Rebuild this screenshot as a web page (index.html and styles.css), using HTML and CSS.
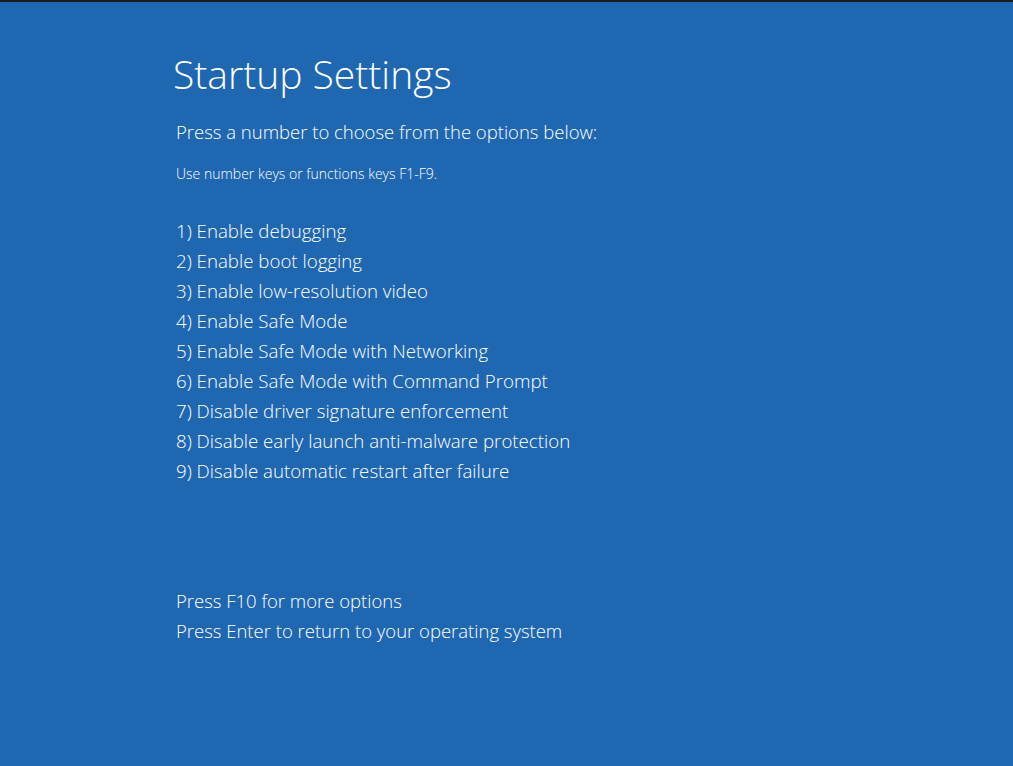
FILE: index.html
```html
<!DOCTYPE html>
<html lang="en">
<head>
<meta charset="utf-8">
<title>Startup Settings</title>
<link rel="stylesheet" href="styles.css">
</head>
<body>
<main class="screen">
  <h1 class="title">Startup Settings</h1>
  <p class="lead">Press a number to choose from the options below:</p>
  <p class="hint">Use number keys or functions keys F1-F9.</p>
  <ol class="options">
    <li>1) Enable debugging</li>
    <li>2) Enable boot logging</li>
    <li>3) Enable low-resolution video</li>
    <li>4) Enable Safe Mode</li>
    <li>5) Enable Safe Mode with Networking</li>
    <li>6) Enable Safe Mode with Command Prompt</li>
    <li>7) Disable driver signature enforcement</li>
    <li>8) Disable early launch anti-malware protection</li>
    <li>9) Disable automatic restart after failure</li>
  </ol>
  <div class="footer">
    <p>Press F10 for more options</p>
    <p>Press Enter to return to your operating system</p>
  </div>
</main>
</body>
</html>
```
FILE: styles.css
```css
html, body {
  margin: 0;
  padding: 0;
  height: 100%;
}
body {
  background: #2067b2;
  border-top: 2px solid #1c1c1c;
  box-sizing: border-box;
  color: #ffffff;
  font-family: "Open Sans", "Noto Sans", sans-serif;
  font-weight: 300;
}
.screen {
  padding: 48px 0 0 176px;
  display: flex;
  flex-direction: column;
}
.title {
  margin: 0 0 0 -3px;
  font-size: 39px;
  font-weight: 300;
  line-height: 48px;
}
.lead {
  margin: 21px 0 0;
  font-size: 18.5px;
  line-height: 26px;
}
.hint {
  margin: 19px 0 0;
  font-size: 14px;
  line-height: 20px;
}
.options {
  list-style: none;
  margin: 32px 0 0;
  padding: 0;
  font-size: 18.7px;
  line-height: 30px;
}
.footer {
  margin-top: 100px;
  font-size: 18.5px;
  line-height: 30px;
}
.footer p {
  margin: 0;
}
```
